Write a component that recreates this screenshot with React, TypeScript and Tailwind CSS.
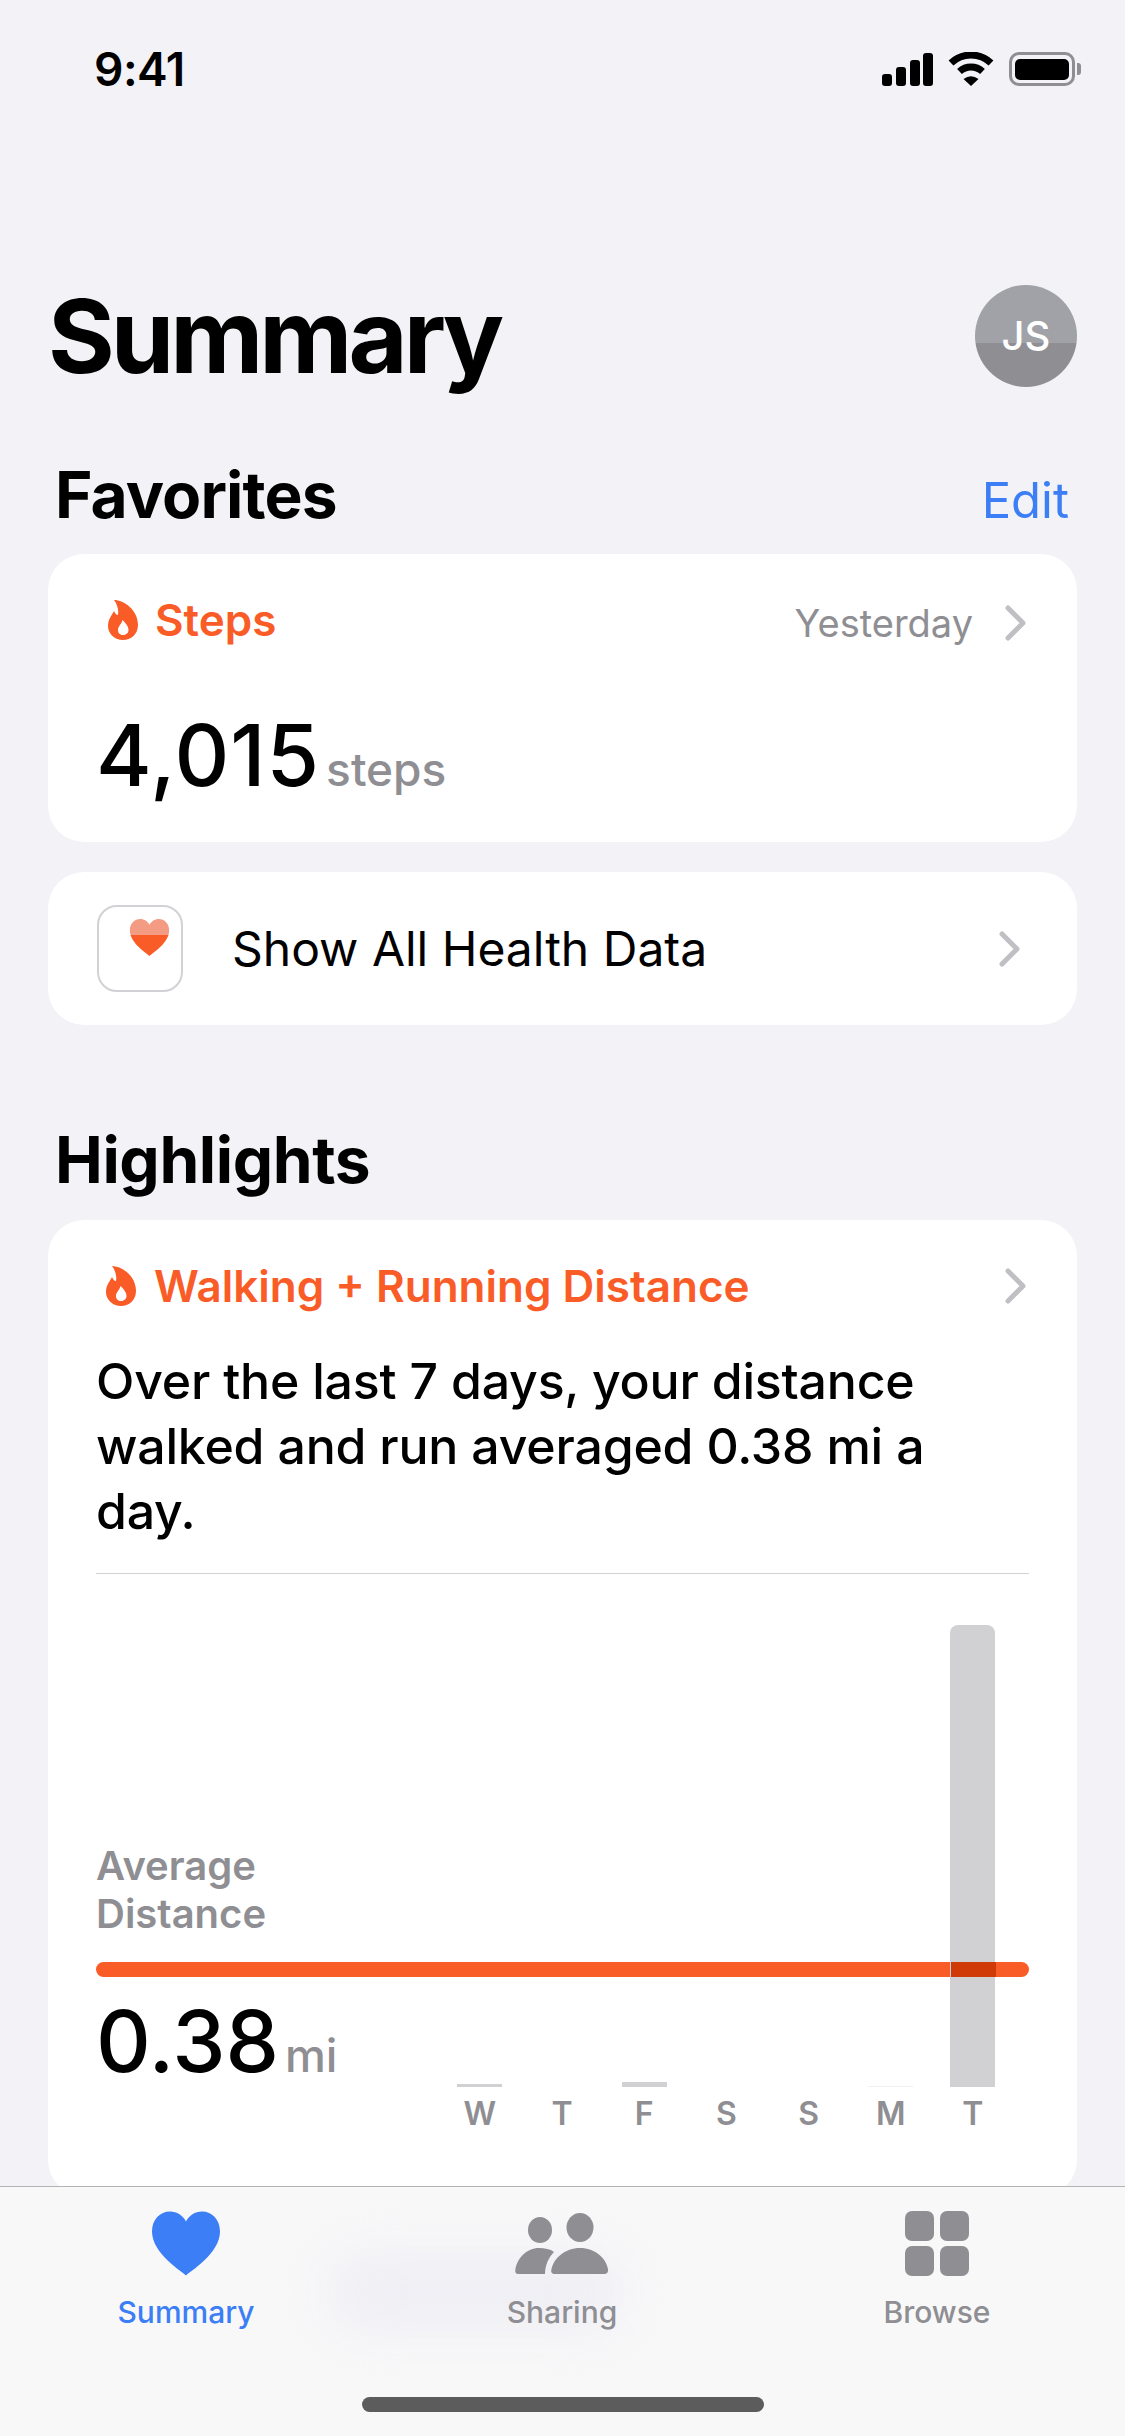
const FLAME_PATH =
  "M6 0C16 0 30 10 30 25C30 34 23 40 15 40C7 40 0 34 0 26C0 19 4 15 6 11C7 13 8 15 10 15C11 10 9 4 6 0ZM15 35C11.5 35 10 32.5 10 30C10 26 13.5 24.5 14.5 20C17 22.5 20.5 26 20.5 30C20.5 32.5 18.5 35 15 35Z";
const HEART_PATH =
  "M34 64C30 60 0 42 0 20C0 8 8 0 18 0C25 0 31 4 34 10C37 4 43 0 50 0C60 0 68 8 68 20C68 42 38 60 34 64Z";

const DAYS = [
  { label: "W", height: "h-[3px]", color: "bg-[#d1d1d3]" },
  { label: "T", height: "h-0", color: "bg-[#d1d1d3]" },
  { label: "F", height: "h-[5px]", color: "bg-[#d1d1d3]" },
  { label: "S", height: "h-0", color: "bg-[#d1d1d3]" },
  { label: "S", height: "h-0", color: "bg-[#d1d1d3]" },
  { label: "M", height: "h-px", color: "bg-[#f0f0f0]" },
  { label: "T", height: "h-[462px]", color: "bg-[#d1d1d3] rounded-t-[8px]" },
];

function Flame() {
  return (
    <svg width="30" height="40" viewBox="0 0 30 40" className="shrink-0">
      <path d={FLAME_PATH} fill="#fa5c28" fillRule="evenodd" />
    </svg>
  );
}

function Chevron({ className }: { className?: string }) {
  return (
    <svg width="22" height="36" viewBox="0 0 22 36" className={className}>
      <path
        d="M3 3L18 18L3 33"
        fill="none"
        stroke="#c0c0c4"
        strokeWidth="5"
        strokeLinecap="round"
        strokeLinejoin="round"
      />
    </svg>
  );
}

function StatusBar() {
  return (
    <div className="flex h-[86px] items-start justify-between pt-[45px] pl-[94px] pr-[44px]">
      <span className="text-[46px] leading-[48px] font-semibold tracking-[-0.5px] text-black">9:41</span>
      <div className="mt-[7px] flex items-start">
        <svg width="51" height="33" viewBox="0 0 51 33" className="mt-px">
          <rect x="0" y="21" width="10" height="12" rx="3" />
          <rect x="14" y="14" width="10" height="19" rx="3" />
          <rect x="28" y="7" width="10" height="26" rx="3" />
          <rect x="41" y="0" width="10" height="33" rx="3" />
        </svg>
        <svg width="46" height="34" viewBox="0 0 46 34" className="ml-[15px]">
          <path d="M3 11A29 29 0 0 1 43 11" fill="none" stroke="#000" strokeWidth="7" />
          <path d="M11.5 19.5A17 17 0 0 1 34.5 19.5" fill="none" stroke="#000" strokeWidth="7" />
          <path d="M15.5 27Q23 21.5 30.5 27L23 34Z" />
        </svg>
        <div className="ml-[15px] flex items-center">
          <div className="flex h-[34px] w-[66px] items-center justify-center rounded-[10px] border-[3px] border-[#8e8e93]">
            <div className="h-[21px] w-[54px] rounded-[5px] bg-black" />
          </div>
          <div className="ml-[2px] h-[12px] w-[4px] rounded-r-[3px] bg-[#8e8e93]" />
        </div>
      </div>
    </div>
  );
}

function Avatar() {
  return (
    <div className="relative flex h-[102px] w-[102px] items-center justify-center overflow-hidden rounded-full bg-[linear-gradient(#a0a2a8_0%,#a0a2a8_57%,#8e8e93_57%,#8e8e93_100%)]">
      <span className="text-[40px] leading-none font-medium text-white">JS</span>
    </div>
  );
}

function StepsCard() {
  return (
    <div className="mt-[23px] h-[288px] rounded-[36px] bg-white pl-[48px] pr-[50px] pt-[44px]">
      <div className="flex items-center">
        <div className="ml-[12px] flex items-center">
          <Flame />
        </div>
        <span className="ml-[17px] text-[44px] leading-[44px] font-semibold text-[#fa5c28]">Steps</span>
        <span className="mt-[6px] ml-auto text-[38px] leading-[34px] text-[#8e8e93]">Yesterday</span>
        <Chevron className="mt-[6px] ml-[32px]" />
      </div>
      <div className="mt-[71px] flex items-baseline">
        <span className="text-[85px] leading-[86px] font-medium tracking-[1px] text-black">4,015</span>
        <span className="ml-[6px] text-[46px] leading-[44px] font-medium text-[#8e8e93]">steps</span>
      </div>
    </div>
  );
}

function HealthDataRow() {
  return (
    <div className="mt-[30px] flex h-[153px] items-center rounded-[36px] bg-white pl-[49px] pr-[56px]">
      <div className="flex h-[87px] w-[86px] shrink-0 items-start justify-end rounded-[20px] border-2 border-[#d1d1d6] pr-[11px] pt-[12px]">
        <svg width="41" height="37" viewBox="0 0 68 64">
          <defs>
            <linearGradient id="healthHeart" x1="0" y1="0" x2="0" y2="1">
              <stop offset="0.43" stopColor="#f49b84" />
              <stop offset="0.43" stopColor="#fa5c28" />
            </linearGradient>
          </defs>
          <path d={HEART_PATH} fill="url(#healthHeart)" />
        </svg>
      </div>
      <span className="ml-[49px] text-[48px] leading-[56px] text-black">Show All Health Data</span>
      <Chevron className="ml-auto" />
    </div>
  );
}

function DistanceCard() {
  return (
    <div className="mt-[24px] h-[976px] rounded-[36px] bg-white px-[48px] pt-[44px]">
      <div className="flex items-center">
        <div className="ml-[10px] flex items-center">
          <Flame />
        </div>
        <span className="ml-[18px] text-[44px] leading-[44px] font-semibold text-[#fa5c28]">Walking + Running Distance</span>
        <Chevron className="ml-auto mr-[2px]" />
      </div>
      <p className="mt-[41px] text-[50px] leading-[65px] font-medium tracking-[-0.2px] text-black">
        Over the last 7 days, your distance
        <br />
        walked and run averaged 0.38 mi a
        <br />
        day.
      </p>
      <div className="mt-[29px] h-px bg-[#d1d1d6]" />

      <div className="relative mt-[51px] h-[520px]">
        {/* average overlay sits under the bars */}
        <div className="absolute inset-x-0 top-[217px]">
          <div className="text-[40px] leading-[48px] font-semibold text-[#8e8e93]">
            Average
            <br />
            Distance
          </div>
          <div className="mt-[24px] h-[15px] rounded-full bg-[#fa5c28]" />
          <div className="mt-[22px] flex items-baseline">
            <span className="text-[85px] leading-[86px] font-medium text-black">0.38</span>
            <span className="ml-[6px] text-[46px] leading-[44px] font-medium text-[#8e8e93]">mi</span>
          </div>
        </div>

        <div className="relative flex h-full items-start justify-end pr-[15px]">
          {DAYS.map((day, i) => (
            <div key={i} className="flex h-full w-[82.2px] flex-col items-center">
              <div className="flex h-[462px] w-[45px] shrink-0 items-end">
                <div className={`w-full ${day.height} ${day.color}`} />
              </div>
              <span className="mt-[11px] text-[32px] leading-[32px] font-semibold text-[#8e8e93]">{day.label}</span>
            </div>
          ))}
        </div>

        {/* where the last bar crosses the average line */}
        <div className="absolute right-[33.5px] top-[337px] h-[15px] w-[45px] bg-[#cf3a08]" />
      </div>
    </div>
  );
}

function TabBar() {
  return (
    <div className="absolute inset-x-0 bottom-0 h-[250px] overflow-hidden border-t border-[#b3b3b3] bg-[#f8f8f9]">
      <div className="absolute left-[330px] top-[70px] h-[70px] w-[290px] rounded-full bg-[#eeeef4] blur-xl" />
      <div className="relative grid grid-cols-3 pt-[24px]">
        <div className="flex flex-col items-center pr-[3px]">
          <svg width="68" height="65" viewBox="0 0 68 64">
            <path d={HEART_PATH} fill="#3b7ef6" />
          </svg>
          <span className="mt-[18px] text-[30px] leading-[36px] font-medium text-[#3b7ef6]">Summary</span>
        </div>
        <div className="flex flex-col items-center pr-[1px]">
          <svg width="95" height="65" viewBox="0 0 95 65">
            <ellipse cx="25" cy="19" rx="12" ry="13" fill="#8e8e93" />
            <ellipse cx="65" cy="16.5" rx="13.5" ry="14.5" fill="#8e8e93" />
            <path d="M3 63C1 63 0 61.5 0.3 59C2 47 12 37 24 37C30 37 35 38 39 41C34 46 30 54 30 63Z" fill="#8e8e93" />
            <path d="M40 63C37 63 35.5 61 36.5 58C39 47 50 37 65 37C80 37 91 47 93 58C93.5 61 92 63 89 63Z" fill="#8e8e93" />
          </svg>
          <span className="mt-[18px] text-[30px] leading-[36px] font-medium text-[#8e8e93]">Sharing</span>
        </div>
        <div className="flex flex-col items-center pr-[1px]">
          <div className="grid h-[65px] w-[64px] grid-cols-2 gap-x-[6px] gap-y-[5px]">
            <div className="rounded-[7px] bg-[#8e8e93]" />
            <div className="rounded-[7px] bg-[#8e8e93]" />
            <div className="rounded-[7px] bg-[#8e8e93]" />
            <div className="rounded-[7px] bg-[#8e8e93]" />
          </div>
          <span className="mt-[18px] text-[30px] leading-[36px] font-medium text-[#8e8e93]">Browse</span>
        </div>
      </div>
      <div className="absolute bottom-[24px] left-[362px] h-[15px] w-[402px] rounded-full bg-[#5c5c5c]" />
    </div>
  );
}

export default function App() {
  return (
    <div className="relative h-[2436px] w-[1125px] overflow-hidden bg-[#f2f2f7] font-['Inter',sans-serif]">
      <StatusBar />
      <div className="px-[48px]">
        <div className="mt-[199px] flex items-center justify-between">
          <h1 className="text-[102px] leading-[102px] font-bold tracking-[-4px] text-black">Summary</h1>
          <Avatar />
        </div>
        <div className="mt-[72px] flex items-baseline justify-between pl-[7px] pr-[8px]">
          <h2 className="text-[64px] leading-[72px] font-bold tracking-[-0.9px] text-black">Favorites</h2>
          <button className="text-[49px] leading-[60px] text-[#3b7ef6]">Edit</button>
        </div>
        <StepsCard />
        <HealthDataRow />
        <h2 className="mt-[99px] pl-[7px] text-[64px] leading-[72px] font-bold tracking-[-0.4px] text-black">Highlights</h2>
        <DistanceCard />
      </div>
      <TabBar />
    </div>
  );
}
